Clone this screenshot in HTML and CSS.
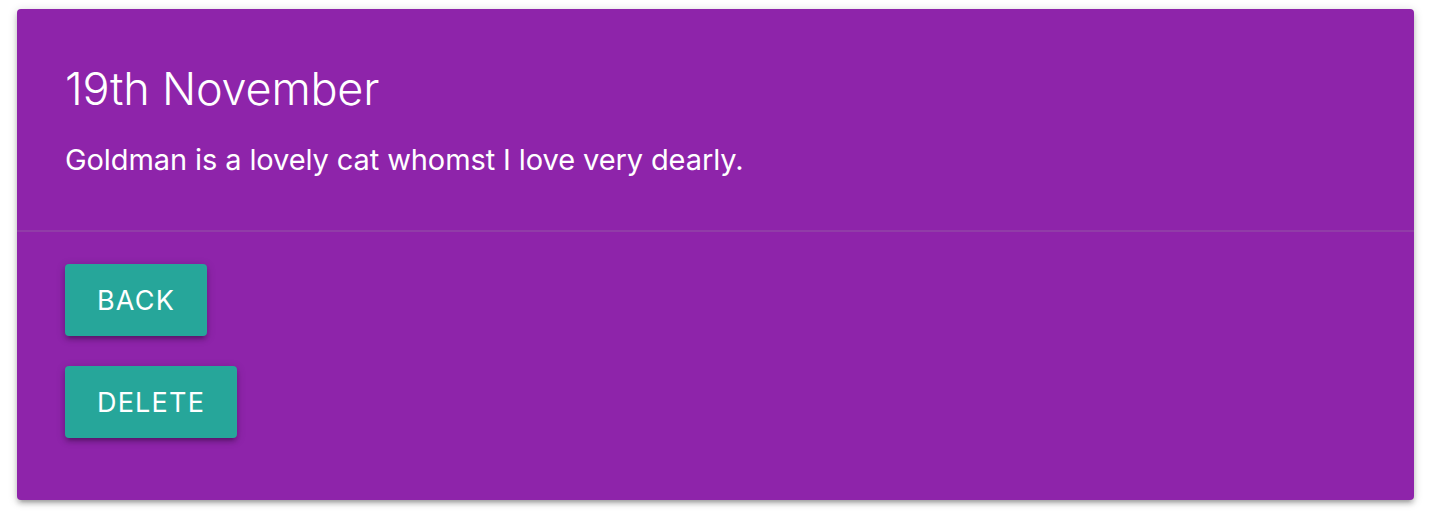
FILE: index.html
```html
<!DOCTYPE html>
<html lang="en">
<head>
<meta charset="utf-8">
<title>19th November</title>
<link rel="stylesheet" href="styles.css">
</head>
<body>
<div class="card">
  <div class="card-content">
    <span class="card-title">19th November</span>
    <p class="card-text">Goldman is a lovely cat whomst I love very dearly.</p>
  </div>
  <div class="card-action">
    <a class="btn" href="#">Back</a>
    <a class="btn" href="#">Delete</a>
  </div>
</div>
</body>
</html>
```

FILE: styles.css
```css
html, body {
  margin: 0;
  padding: 0;
  background: #fff;
}
body {
  padding: 9px 16px 12px 17px;
  font-family: Inter, "Noto Sans", sans-serif;
  color: #fff;
}
.card {
  background: #8e24aa;
  border-radius: 4px;
  box-shadow: 0 4px 4px 0 rgba(0,0,0,.14), 0 6px 2px -4px rgba(0,0,0,.12), 0 2px 10px 0 rgba(0,0,0,.2);
  height: 491px;
  display: flex;
  flex-direction: column;
}
.card-content {
  padding: 48px 48px 48px;
}
.card-title {
  display: block;
  font-size: 45px;
  font-weight: 300;
  line-height: 64px;
  margin-bottom: 16px;
  letter-spacing: -0.2px;
}
.card-text {
  margin: 0;
  font-size: 29px;
  line-height: 45px;
  font-weight: 400;
  letter-spacing: -0.1px;
}
.card-action {
  border-top: 2px solid rgba(160,160,160,.2);
  padding: 32px 48px 0;
  display: flex;
  flex-direction: column;
  align-items: flex-start;
  gap: 30px;
}
.btn {
  display: inline-flex;
  align-items: center;
  height: 72px;
  padding: 0 32px;
  background: #26a69a;
  color: #fff;
  text-decoration: none;
  text-transform: uppercase;
  font-size: 27px;
  letter-spacing: 1.2px;
  border-radius: 4px;
  box-shadow: 0 4px 4px 0 rgba(0,0,0,.14), 0 6px 2px -4px rgba(0,0,0,.12), 0 2px 10px 0 rgba(0,0,0,.2);
}
```
